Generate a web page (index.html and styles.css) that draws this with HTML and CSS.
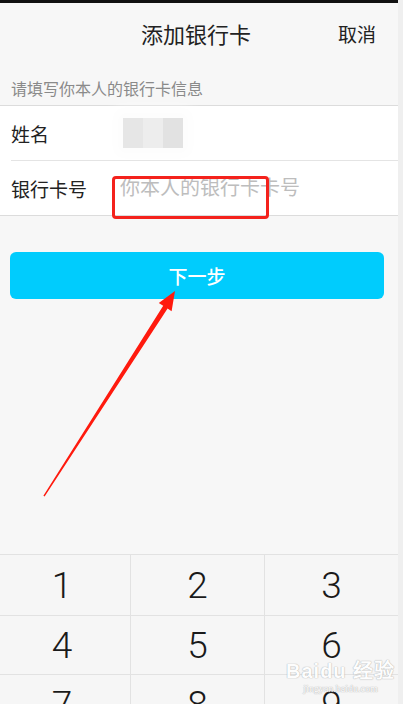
FILE: index.html
```html
<!DOCTYPE html>
<html lang="zh-CN">

<head>
    <meta charset="UTF-8">
    <meta name="viewport" content="width=device-width, initial-scale=1.0">
    <title>添加银行卡</title>
    <link rel="stylesheet" href="styles.css">
</head>

<body>
    <div class="page">
        <div class="header">
            <span class="title">添加银行卡</span>
            <span class="cancel">取消</span>
        </div>
        <div class="tip">请填写你本人的银行卡信息</div>
        <div class="card">
            <div class="row">
                <span class="label">姓名</span>
                <span class="blurred">
                    <i></i><i></i><i></i>
                </span>
            </div>
            <div class="row row-last">
                <span class="label">银行卡号</span>
                <span class="placeholder">你本人的银行卡卡号</span>
                <div class="mark"></div>
            </div>
        </div>
        <div class="btn-wrap">
            <button class="next-btn">下一步</button>
        </div>
        <div class="spacer"></div>
        <div class="keypad">
            <div class="key">1</div>
            <div class="key">2</div>
            <div class="key">3</div>
            <div class="key">4</div>
            <div class="key">5</div>
            <div class="key">6</div>
            <div class="key">7</div>
            <div class="key">8</div>
            <div class="key">9</div>
        </div>

        <!-- annotation arrow -->
        <svg class="arrow" width="403" height="704" viewBox="0 0 403 704">
            <polygon fill="#ff1a0e"
                points="43.4,495.7 163.2,305.7 158.8,303.0 175,291 171.6,311.2 167.6,308.6 44.6,496.5" />
        </svg>

        <div class="watermark">
            <div class="wm-logo">Bai<span>du</span> 经验</div>
            <div class="wm-url">jingyan.baidu.com</div>
        </div>
    </div>
</body>

</html>
```

FILE: styles.css
```css
body {
    margin: 0;
    padding: 0;
    width: 403px;
    height: 704px;
    overflow: hidden;
    background-color: #efefef;
    font-family: "Noto Sans CJK SC", "Noto Sans", sans-serif;
}

.page {
    position: relative;
    width: 398px;
    height: 704px;
    overflow: hidden;
    background-color: #f7f7f7;
    border-top: 3px solid #111;
    box-sizing: border-box;
}

.header {
    height: 59px;
    position: relative;
    display: flex;
    align-items: center;
    justify-content: center;
}

.title {
    font-size: 22px;
    color: #222;
    margin-left: -6px;
}

.cancel {
    position: absolute;
    right: 22px;
    top: 17px;
    font-size: 19px;
    color: #222;
}

.tip {
    padding: 15px 0 6px 11px;
    line-height: 22px;
    font-size: 16px;
    color: #8a8a8a;
}

.card {
    background-color: #fff;
    border-top: 1px solid #dcdcdc;
    border-bottom: 1px solid #dcdcdc;
}

.row {
    position: relative;
    height: 55px;
    display: flex;
    align-items: center;
    padding-left: 11px;
}

.row:first-child::after {
    content: "";
    position: absolute;
    left: 11px;
    right: 0;
    bottom: 0;
    height: 1px;
    background-color: #e4e4e4;
}

.row-last {
    height: 54px;
}

.label {
    width: 109px;
    font-size: 19px;
    color: #222;
}

.blurred {
    display: flex;
    margin-left: 3px;
    height: 30px;
    margin-top: -2px;
    box-shadow: 0 0 12px 8px #fdfdfd;
}

.blurred i {
    display: block;
    width: 20px;
    height: 30px;
    background-color: #e6e6e6;
}

.blurred i:nth-child(2) {
    background-color: #ededed;
}

.blurred i:nth-child(3) {
    background-color: #e2e2e2;
}

.placeholder {
    font-size: 20px;
    color: #bdbdbd;
    margin-top: -3px;
}

.mark {
    position: absolute;
    left: 112px;
    top: 15px;
    width: 157px;
    height: 43px;
    border: 3px solid #f4221c;
    border-radius: 4px;
    box-sizing: border-box;
}

.btn-wrap {
    padding: 36px 14px 0 10px;
}

.next-btn {
    display: block;
    width: 100%;
    height: 47px;
    border: none;
    border-radius: 6px;
    background-color: #00ccfd;
    color: #fff;
    font-family: "Noto Sans CJK SC", sans-serif;
    font-size: 19px;
    font-weight: 500;
}

.spacer {
    height: 255px;
}

.keypad {
    display: grid;
    grid-template-columns: 130px 134px 1fr;
    grid-template-rows: 61px 59px 60px;
    border-top: 1px solid #e2e2e2;
    background-color: #f6f6f6;
}

.key {
    display: flex;
    align-items: center;
    justify-content: center;
    border-bottom: 1px solid #e2e2e2;
    border-left: 1px solid #e2e2e2;
    font-family: Roboto, "Noto Sans", sans-serif;
    font-weight: 300;
    font-size: 37px;
    color: #1a1a1a;
}

.key:nth-child(3n+1) {
    border-left: none;
    padding-right: 6px;
}

.arrow {
    position: absolute;
    left: 0;
    top: -3px;
    pointer-events: none;
}

.watermark {
    position: absolute;
    left: 286px;
    top: 657px;
    color: #fff;
    text-shadow: 0 0 1px #aaa, 0 0 1px #aaa;
    opacity: 0.85;
}

.wm-logo {
    font-family: "Liberation Sans", sans-serif;
    font-weight: bold;
    font-size: 20px;
    line-height: 22px;
    letter-spacing: 1px;
}

.wm-url {
    font-family: "Liberation Serif", serif;
    font-size: 10px;
    line-height: 14px;
    text-align: center;
}
```
